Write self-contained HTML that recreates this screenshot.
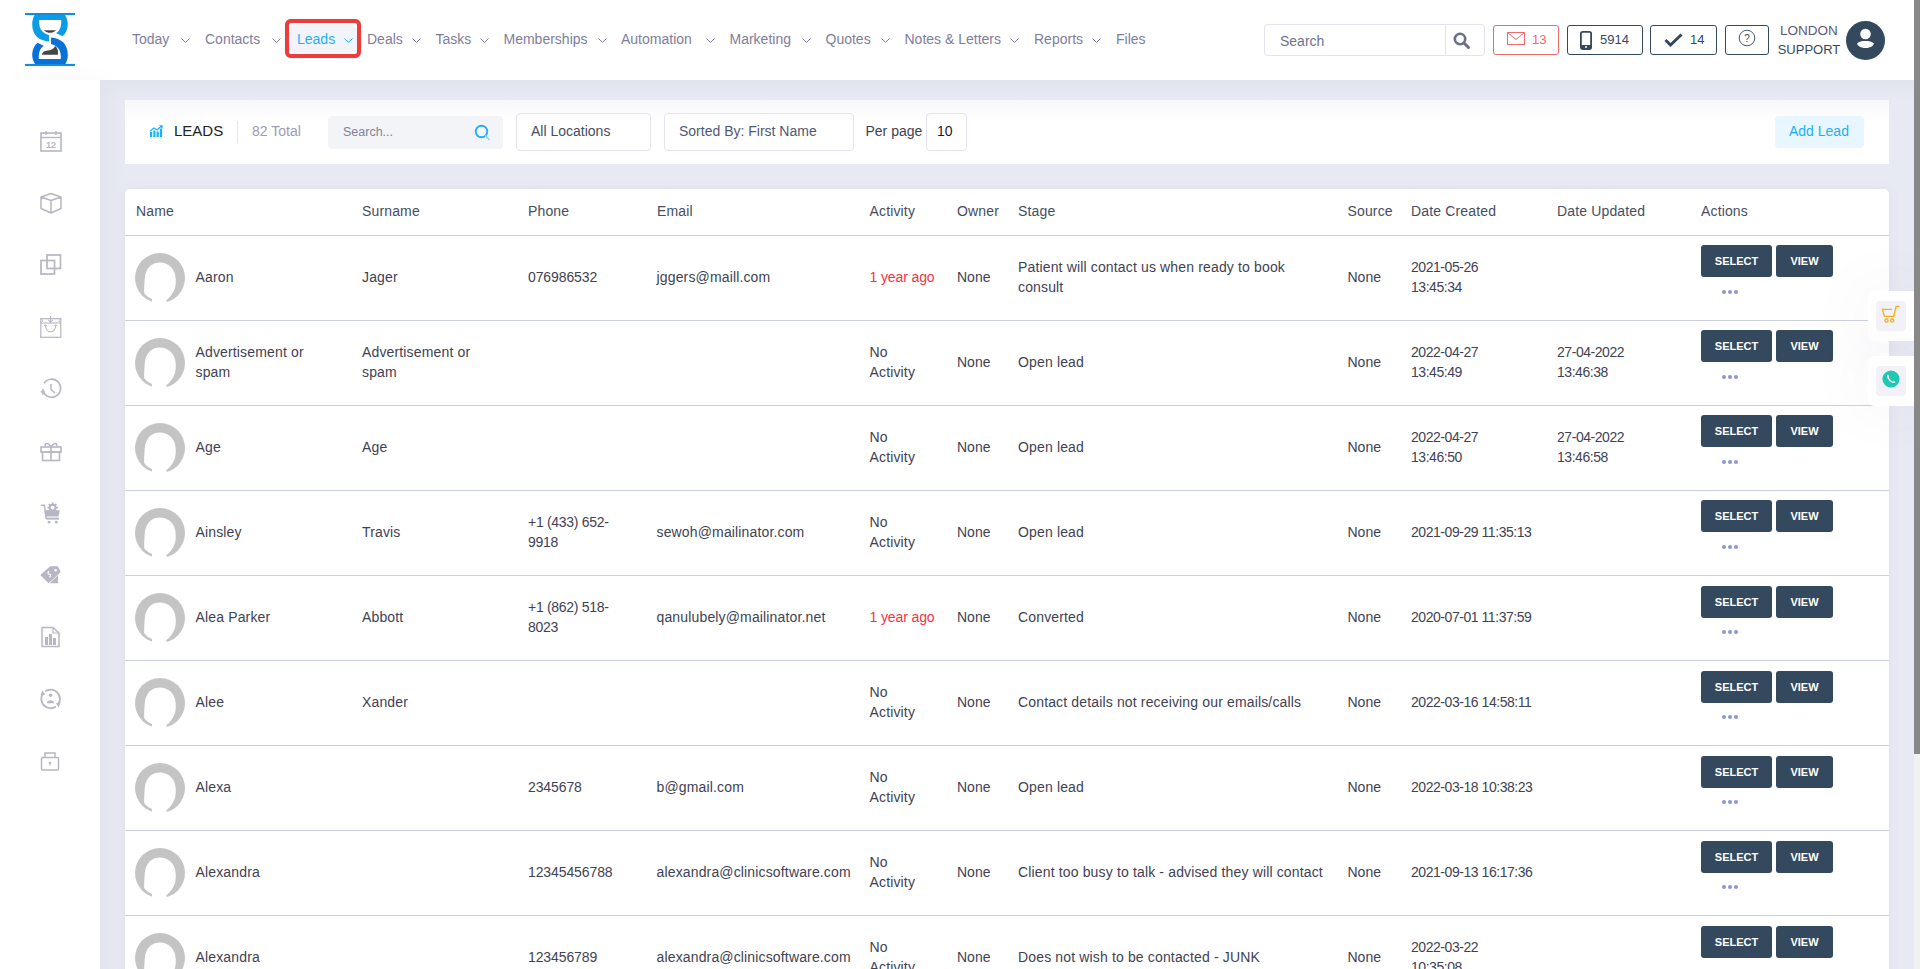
<!DOCTYPE html>
<html><head><meta charset="utf-8"><title>Leads</title>
<style>
*{box-sizing:border-box;margin:0;padding:0}
html,body{width:1920px;height:969px;overflow:hidden}
body{font-family:"Liberation Sans", sans-serif;position:relative;background:#e9ebf4;color:#3f4254}
.a{position:absolute;white-space:nowrap}
.t{position:absolute;white-space:nowrap;font-size:14px;line-height:20px;color:#3f4254;letter-spacing:.15px}
.nav{position:absolute;font-size:14px;line-height:20px;color:#7f7d9c;white-space:nowrap;top:29px}
.chev{position:absolute;top:38px;width:9px;height:5px}
.btn{position:absolute;height:32px;background:#34495e;color:#fff;font-weight:700;font-size:11px;line-height:32px;text-align:center;border-radius:3px}
.dots{position:absolute;width:4px;height:4px;border-radius:50%;background:#8e93d9}
.line{position:absolute;left:125px;width:1764px;height:1px;background:#cdd1df}
</style></head><body>

<div class="a" style="left:100px;top:80px;width:1814px;height:889px;background:linear-gradient(to right,#e2e4ee 0,#e8eaf3 25px,#e8eaf3 100%)"></div>
<div class="a" style="left:100px;top:80px;width:1814px;height:20px;background:linear-gradient(to bottom,#e1e3ed,rgba(232,234,243,0))"></div>
<div class="a" style="left:0;top:0;width:1914px;height:80px;background:#fff"></div>
<div class="a" style="left:0;top:80px;width:100px;height:889px;background:#fff"></div>
<div class="a" style="left:0;top:60px;width:125px;height:20px;background:radial-gradient(ellipse 58px 16px at 62px 20px,rgba(0,0,0,0.018),rgba(0,0,0,0))"></div>
<svg class="a" style="left:25px;top:10px" width="50" height="58" viewBox="0 0 50 58">
<rect x="0" y="3" width="50" height="2.1" fill="#0c8fe3"/>
<rect x="0" y="53.9" width="50" height="2.1" fill="#0c8fe3"/>
<path id="tp" d="M37.4 26.3 C40.5 24 42.5 20 42.8 15 C43 12 42 8 40 5 L9.6 5 C8 8 7.2 11 7.2 14 C7.2 20 9 24 12 27 C15 29.5 19 31 24 31.6 L24 25 C20.5 24.2 17.5 22 15.8 19.5 C14.5 17 14 14 14.2 9.9 L36.2 9.9 C36.4 14 36 17 34.6 19.5 C33.5 21.3 32.5 22.3 31 23 Z" fill="#0a9ce6"/>
<path d="M37.4 26.3 C40.5 24 42.5 20 42.8 15 C43 12 42 8 40 5 L9.6 5 C8 8 7.2 11 7.2 14 C7.2 20 9 24 12 27 C15 29.5 19 31 24 31.6 L24 25 C20.5 24.2 17.5 22 15.8 19.5 C14.5 17 14 14 14.2 9.9 L36.2 9.9 C36.4 14 36 17 34.6 19.5 C33.5 21.3 32.5 22.3 31 23 Z" fill="#0a72d4" transform="rotate(180 25 29.5)"/>
<path d="M19 20.2 H31 C29 22 27 22.8 25 22.8 C23 22.8 21 22 19 20.2Z" fill="#464646"/>
<path d="M17 44.7 C17.5 42 19 41 23 40.5 C27 40 29 38.5 30 36 C32 37.5 33.5 40 33 44.7 Z" fill="#464646"/>
</svg>
<div class="a" style="left:285px;top:19px;width:76px;height:39px;border:4px solid #ee3b3b;border-radius:6px;background:#fff;box-shadow:0 0 1px rgba(0,0,0,.35)"></div>
<div class="a" style="left:290px;top:25px;width:67px;height:28px;border-radius:6px;background:#f3f4fa"></div>
<div class="nav" style="left:132px;color:#7f7d9c">Today</div>
<svg class="chev" style="left:181px" viewBox="0 0 9 5"><path d="M0.5 0.5 L4.5 4.5 L8.5 0.5" fill="none" stroke="#7f7d9c" stroke-width="1"/></svg>
<div class="nav" style="left:205px;color:#7f7d9c">Contacts</div>
<svg class="chev" style="left:272px" viewBox="0 0 9 5"><path d="M0.5 0.5 L4.5 4.5 L8.5 0.5" fill="none" stroke="#7f7d9c" stroke-width="1"/></svg>
<div class="nav" style="left:297px;color:#1db2fa">Leads</div>
<svg class="chev" style="left:344px" viewBox="0 0 9 5"><path d="M0.5 0.5 L4.5 4.5 L8.5 0.5" fill="none" stroke="#1db2fa" stroke-width="1"/></svg>
<div class="nav" style="left:367px;color:#7f7d9c">Deals</div>
<svg class="chev" style="left:412px" viewBox="0 0 9 5"><path d="M0.5 0.5 L4.5 4.5 L8.5 0.5" fill="none" stroke="#7f7d9c" stroke-width="1"/></svg>
<div class="nav" style="left:435.5px;color:#7f7d9c">Tasks</div>
<svg class="chev" style="left:480px" viewBox="0 0 9 5"><path d="M0.5 0.5 L4.5 4.5 L8.5 0.5" fill="none" stroke="#7f7d9c" stroke-width="1"/></svg>
<div class="nav" style="left:503.5px;color:#7f7d9c">Memberships</div>
<svg class="chev" style="left:597.5px" viewBox="0 0 9 5"><path d="M0.5 0.5 L4.5 4.5 L8.5 0.5" fill="none" stroke="#7f7d9c" stroke-width="1"/></svg>
<div class="nav" style="left:621px;color:#7f7d9c">Automation</div>
<svg class="chev" style="left:705.5px" viewBox="0 0 9 5"><path d="M0.5 0.5 L4.5 4.5 L8.5 0.5" fill="none" stroke="#7f7d9c" stroke-width="1"/></svg>
<div class="nav" style="left:729.5px;color:#7f7d9c">Marketing</div>
<svg class="chev" style="left:801.5px" viewBox="0 0 9 5"><path d="M0.5 0.5 L4.5 4.5 L8.5 0.5" fill="none" stroke="#7f7d9c" stroke-width="1"/></svg>
<div class="nav" style="left:825.5px;color:#7f7d9c">Quotes</div>
<svg class="chev" style="left:880.5px" viewBox="0 0 9 5"><path d="M0.5 0.5 L4.5 4.5 L8.5 0.5" fill="none" stroke="#7f7d9c" stroke-width="1"/></svg>
<div class="nav" style="left:904.5px;color:#7f7d9c">Notes &amp; Letters</div>
<svg class="chev" style="left:1010px" viewBox="0 0 9 5"><path d="M0.5 0.5 L4.5 4.5 L8.5 0.5" fill="none" stroke="#7f7d9c" stroke-width="1"/></svg>
<div class="nav" style="left:1034px;color:#7f7d9c">Reports</div>
<svg class="chev" style="left:1092px" viewBox="0 0 9 5"><path d="M0.5 0.5 L4.5 4.5 L8.5 0.5" fill="none" stroke="#7f7d9c" stroke-width="1"/></svg>
<div class="nav" style="left:1116px;color:#7f7d9c">Files</div>
<div class="a" style="left:1264px;top:24px;width:221px;height:32px;border:1px solid #e2e2f0;border-radius:4px;background:#fff"></div>
<div class="a" style="left:1445px;top:25px;width:1px;height:30px;background:#e2e2f0"></div>
<div class="a" style="left:1280px;top:31px;font-size:14px;line-height:20px;color:#6c7293">Search</div>
<svg class="a" style="left:1453px;top:32px" width="18" height="18" viewBox="0 0 18 18"><circle cx="7" cy="7" r="5.2" fill="none" stroke="#6c6f8a" stroke-width="2.6"/><path d="M10.8 10.8 L15.5 15.5" stroke="#6c6f8a" stroke-width="3" stroke-linecap="round"/></svg>
<div class="a" style="left:1493px;top:25px;width:66px;height:30px;border:1px solid #f06b6b;border-radius:3px"></div>
<svg class="a" style="left:1507px;top:32px" width="18" height="13" viewBox="0 0 18 13"><rect x="0.5" y="0.5" width="17" height="12" fill="none" stroke="#f06b6b" stroke-width="1"/><path d="M0.5 0.5 L9 7.5 L17.5 0.5" fill="none" stroke="#f06b6b" stroke-width="1"/></svg>
<div class="a" style="left:1532px;top:30px;font-size:13px;line-height:20px;color:#f06b6b">13</div>
<div class="a" style="left:1567px;top:25px;width:76px;height:30px;border:1px solid #34495e;border-radius:3px"></div>
<svg class="a" style="left:1580px;top:31px" width="12" height="19" viewBox="0 0 12 19"><rect x="0.9" y="0.9" width="10.2" height="17.2" rx="1.8" fill="none" stroke="#34495e" stroke-width="1.8"/><rect x="1" y="14" width="10" height="4" fill="#34495e"/><circle cx="6" cy="16" r="1" fill="#fff"/></svg>
<div class="a" style="left:1600px;top:30px;font-size:13px;line-height:20px;color:#34495e">5914</div>
<div class="a" style="left:1650px;top:25px;width:67px;height:30px;border:1px solid #34495e;border-radius:3px"></div>
<svg class="a" style="left:1664px;top:33px" width="19" height="14" viewBox="0 0 19 14"><path d="M1.5 7 L6.5 12 L17.5 1.5" fill="none" stroke="#34495e" stroke-width="3"/></svg>
<div class="a" style="left:1690px;top:30px;font-size:13px;line-height:20px;color:#34495e">14</div>
<div class="a" style="left:1725px;top:25px;width:44px;height:30px;border:1px solid #34495e;border-radius:3px"></div>
<svg class="a" style="left:1738px;top:29px" width="18" height="18" viewBox="0 0 18 18"><circle cx="9" cy="9" r="7.8" fill="none" stroke="#34495e" stroke-width="0.9"/><text x="9" y="12.5" text-anchor="middle" font-family="Liberation Sans" font-size="10" fill="#34495e">?</text></svg>
<div class="a" style="left:1770px;top:21px;width:78px;text-align:center;font-size:13.5px;line-height:19px;color:#5f5877">LONDON</div>
<div class="a" style="left:1772px;top:40px;width:74px;text-align:center;font-size:13px;line-height:19px;color:#34495e">SUPPORT</div>
<svg class="a" style="left:1846px;top:21px" width="39" height="39" viewBox="0 0 39 39"><circle cx="19.5" cy="19.5" r="19.5" fill="#34495e"/><circle cx="19.5" cy="13" r="5.3" fill="#fff"/><path d="M11 22.5 C13 20.5 16 20 19.5 20 C23 20 26 20.5 28 22.5 C27 25.5 23.5 27 19.5 27 C15.5 27 12 25.5 11 22.5Z" fill="#fff"/></svg>
<svg class="a" style="left:40px;top:130px" width="22" height="22" viewBox="0 0 22 22"><rect x="1" y="3" width="20" height="18" fill="none" stroke="#b6b6c4" stroke-width="1.6"/><path d="M1 7.5 H21" stroke="#b6b6c4" stroke-width="1.4"/><path d="M6 1 V5 M16 1 V5" stroke="#b6b6c4" stroke-width="1.4"/><text x="11" y="17.8" text-anchor="middle" font-family="Liberation Sans" font-weight="bold" font-size="9" fill="#b6b6c4">12</text></svg>
<svg class="a" style="left:40px;top:192px" width="22" height="22" viewBox="0 0 22 22"><path d="M1 5 L11 1.5 L21 5 V16.5 L11 21 L1 16.5 Z M1 5 L11 8.5 L21 5 M11 8.5 V21" fill="none" stroke="#b6b6c4" stroke-width="1.5" stroke-linejoin="round"/></svg>
<svg class="a" style="left:40px;top:254px" width="22" height="22" viewBox="0 0 22 22"><rect x="7" y="1" width="13.5" height="13.5" fill="none" stroke="#b6b6c4" stroke-width="1.7"/><rect x="1" y="6.5" width="13.5" height="13.5" fill="none" stroke="#b6b6c4" stroke-width="1.7"/></svg>
<svg class="a" style="left:40px;top:316px" width="22" height="22" viewBox="0 0 22 22"><rect x="0.8" y="2.7" width="20" height="18.6" fill="none" stroke="#b6b6c4" stroke-width="1.2"/><path d="M0.8 7 H20.8" stroke="#b6b6c4" stroke-width="1.1"/><path d="M0.8 2.7 L3 4.8 L0.8 7 M20.8 2.7 L18.6 4.8 L20.8 7" fill="none" stroke="#b6b6c4" stroke-width="0.9"/><path d="M10.6 0 V6" stroke="#b6b6c4" stroke-width="1.1"/><path d="M8.3 3.8 L10.6 6.3 L12.9 3.8" fill="none" stroke="#b6b6c4" stroke-width="1.1"/><path d="M5.5 9.2 C5.5 18 15.7 18 15.7 9.2" fill="none" stroke="#b6b6c4" stroke-width="1.1"/><path d="M4 10.3 L5.5 8.6 L7 10.3 M14.2 10.3 L15.7 8.6 L17.2 10.3" fill="none" stroke="#b6b6c4" stroke-width="1"/></svg>
<svg class="a" style="left:40px;top:378px" width="22" height="22" viewBox="0 0 22 22"><path d="M3.2 14 A9 9 0 1 0 2.5 8" fill="none" stroke="#b6b6c4" stroke-width="1.6" transform="rotate(20 11 11)"/><path d="M11 6 V11.5 L15 15" fill="none" stroke="#b6b6c4" stroke-width="1.5"/><path d="M0.5 13 L5 12.5 L3 17.5Z" fill="#b6b6c4"/></svg>
<svg class="a" style="left:40px;top:440px" width="22" height="22" viewBox="0 0 22 22"><rect x="1" y="7" width="20" height="5" fill="none" stroke="#b6b6c4" stroke-width="1.6"/><rect x="2.5" y="12" width="17" height="8.5" fill="none" stroke="#b6b6c4" stroke-width="1.6"/><path d="M11 7 V20.5" stroke="#b6b6c4" stroke-width="1.6"/><path d="M11 7 C8 2 4 3 5.5 6.5 M11 7 C14 2 18 3 16.5 6.5" fill="none" stroke="#b6b6c4" stroke-width="1.5"/></svg>
<svg class="a" style="left:40px;top:502px" width="22" height="22" viewBox="0 0 22 22"><path d="M0.8 3.3 H4.4 L6.2 16.6 H19" fill="none" stroke="#b6b6c4" stroke-width="1.5"/><g transform="translate(12.7 5.6)"><circle r="3.9" fill="#b6b6c4"/><path d="M-0.9 -5.3 H0.9 V5.3 H-0.9Z M-5.3 -0.9 V0.9 H5.3 V-0.9Z" fill="#b6b6c4"/><path d="M-0.9 -5.3 H0.9 V5.3 H-0.9Z M-5.3 -0.9 V0.9 H5.3 V-0.9Z" fill="#b6b6c4" transform="rotate(45)"/><circle r="1.9" fill="#fff"/></g><path d="M4.4 8.3 H19.9 L18.4 14.6 H5.5 Z" fill="#b6b6c4"/><rect x="6.3" y="15.8" width="12.6" height="1.7" fill="#b6b6c4"/><circle cx="9.1" cy="20.2" r="1.4" fill="#b6b6c4"/><circle cx="16.3" cy="20.2" r="1.4" fill="#b6b6c4"/></svg>
<svg class="a" style="left:40px;top:564px" width="22" height="22" viewBox="0 0 22 22"><path d="M0.3 11 L10.2 2.2 H17.6 L21 7.8 L8.6 19.2 Z" fill="#b6b6c4"/><path d="M9.6 19.2 L18 11.3 V19.2 Z" fill="#b6b6c4"/><circle cx="15.6" cy="6.3" r="1.3" fill="#fff"/><path d="M19.5 5.5 C21 4.5 21.5 7 20 8" fill="none" stroke="#fff" stroke-width="0.8"/><path d="M10.2 7.6 C8.4 7.4 7.6 9.6 9.2 10.2 C10.8 10.8 10.4 13.2 8.2 13" fill="none" stroke="#fff" stroke-width="1.2" transform="rotate(-20 9.2 10.3)"/></svg>
<svg class="a" style="left:40px;top:626px" width="22" height="22" viewBox="0 0 22 22"><path d="M2 1.5 H13 L19 7 V20.5 H2 Z" fill="none" stroke="#b6b6c4" stroke-width="1.5" stroke-linejoin="round"/><path d="M13 1.5 V7 H19" fill="none" stroke="#b6b6c4" stroke-width="1.2"/><rect x="5" y="11" width="3" height="8" fill="#b6b6c4"/><rect x="9" y="8" width="3" height="11" fill="#b6b6c4"/><rect x="13" y="12" width="3" height="7" fill="#b6b6c4"/></svg>
<svg class="a" style="left:40px;top:688px" width="22" height="22" viewBox="0 0 22 22"><path d="M5.27 3.28 A9.3 9.3 0 0 1 18.22 16.23" fill="none" stroke="#b6b6c4" stroke-width="1.9"/><path d="M15.93 18.52 A9.3 9.3 0 0 1 2.98 5.57" fill="none" stroke="#b6b6c4" stroke-width="1.9"/><path d="M16 15.2 L20.6 14.6 L18.6 19.4Z" fill="#b6b6c4"/><path d="M5.2 6.6 L0.6 7.2 L2.6 2.4Z" fill="#b6b6c4"/><circle cx="10.6" cy="7.3" r="1.8" fill="#b6b6c4"/><path d="M6.9 15.2 C6.9 11.2 14.3 11.2 14.3 15.2 Z" fill="#b6b6c4"/></svg>
<svg class="a" style="left:40px;top:750px" width="22" height="22" viewBox="0 0 22 22"><path d="M5 7.5 V3 H15 V7.5" fill="none" stroke="#b6b6c4" stroke-width="1.5"/><rect x="1.5" y="7.5" width="17" height="12.5" rx="1" fill="none" stroke="#b6b6c4" stroke-width="1.5"/><circle cx="10" cy="13" r="1.2" fill="#b6b6c4"/><path d="M10 13 V15.5" stroke="#b6b6c4" stroke-width="1"/></svg>
<div class="a" style="left:125px;top:100px;width:1764px;height:64px;background:#fff"></div>
<div class="a" style="left:125px;top:100px;width:1764px;height:22px;background:linear-gradient(#f8f8fb,#fff)"></div>
<svg class="a" style="left:150px;top:125px" width="13" height="12" viewBox="0 0 13 12"><rect x="0" y="7" width="2.2" height="5" fill="#1ab2ff"/><rect x="3.3" y="5.5" width="2.2" height="6.5" fill="#1ab2ff"/><rect x="6.6" y="6.5" width="2.2" height="5.5" fill="#1ab2ff"/><rect x="9.9" y="3.5" width="2.2" height="8.5" fill="#1ab2ff"/><path d="M0 6 L4 3 L7 5 L11.5 1" fill="none" stroke="#1ab2ff" stroke-width="1.3"/><path d="M9 0.3 H12.6 V3.8Z" fill="#1ab2ff"/></svg>
<div class="a" style="left:174px;top:121px;font-size:15px;line-height:20px;color:#212121">LEADS</div>
<div class="a" style="left:237px;top:121px;width:1px;height:22px;background:#e4e6ef"></div>
<div class="a" style="left:252px;top:121px;font-size:14px;line-height:20px;color:#9a9cb4">82 Total</div>
<div class="a" style="left:328px;top:116px;width:175px;height:33px;background:#f3f4f8;border-radius:4px"></div>
<div class="a" style="left:343px;top:122px;font-size:12.5px;line-height:20px;color:#7e8299">Search...</div>
<svg class="a" style="left:474px;top:124px" width="17" height="18" viewBox="0 0 17 18"><circle cx="7.5" cy="7.5" r="5.8" fill="none" stroke="#1ab0fb" stroke-width="1.9"/><path d="M11.8 12 L15 15.5" stroke="#8fd5fb" stroke-width="1.8" stroke-linecap="round"/></svg>
<div class="a" style="left:516px;top:113px;width:135px;height:38px;border:1px solid #e2e4ee;border-radius:4px"></div>
<div class="a" style="left:531px;top:121px;font-size:14px;line-height:20px;color:#464e5f">All Locations</div>
<div class="a" style="left:664px;top:113px;width:190px;height:38px;border:1px solid #e2e4ee;border-radius:4px"></div>
<div class="a" style="left:679px;top:121px;font-size:14px;line-height:20px;color:#525870">Sorted By: First Name</div>
<div class="a" style="left:865.5px;top:121px;font-size:14px;line-height:20px;color:#3f4254">Per page</div>
<div class="a" style="left:926px;top:113px;width:41px;height:38px;border:1px solid #e2e4ee;border-radius:4px"></div>
<div class="a" style="left:937px;top:121px;font-size:14px;line-height:20px;color:#181c32">10</div>
<div class="a" style="left:1775px;top:116px;width:89px;height:32px;background:#e8f6ff;border-radius:4px"></div>
<div class="a" style="left:1789px;top:121px;font-size:14px;line-height:20px;color:#1bb0f5;font-weight:400">Add Lead</div>
<div class="a" style="left:125px;top:189px;width:1764px;height:800px;background:#fff;border-radius:5px 5px 0 0;box-shadow:0 0 12px rgba(70,80,130,0.07)"></div>
<div class="t" style="left:136px;top:201px;color:#464e5f">Name</div>
<div class="t" style="left:362px;top:201px;color:#464e5f">Surname</div>
<div class="t" style="left:528px;top:201px;color:#464e5f">Phone</div>
<div class="t" style="left:657px;top:201px;color:#464e5f">Email</div>
<div class="t" style="left:869.5px;top:201px;color:#464e5f">Activity</div>
<div class="t" style="left:957px;top:201px;color:#464e5f">Owner</div>
<div class="t" style="left:1018px;top:201px;color:#464e5f">Stage</div>
<div class="t" style="left:1347.5px;top:201px;color:#464e5f">Source</div>
<div class="t" style="left:1411px;top:201px;color:#464e5f">Date Created</div>
<div class="t" style="left:1557px;top:201px;color:#464e5f">Date Updated</div>
<div class="t" style="left:1701px;top:201px;color:#464e5f">Actions</div>
<div class="line" style="top:235px"></div>
<div class="line" style="top:320px"></div>
<div class="line" style="top:405px"></div>
<div class="line" style="top:490px"></div>
<div class="line" style="top:575px"></div>
<div class="line" style="top:660px"></div>
<div class="line" style="top:745px"></div>
<div class="line" style="top:830px"></div>
<div class="line" style="top:915px"></div>
<svg class="a" style="left:135px;top:253px" width="50" height="50" viewBox="0 0 50 50"><circle cx="25" cy="25" r="25" fill="#c4c4c4"/><path d="M17.5 51 L16.8 45.8 C13.5 44.5 10.5 42.5 9.2 40 C9 36 9.4 31 9.7 26 C10 20 12 16 15 13 C18 10.5 21 9.4 25 9.4 C29 9.4 33 11 36 14 C39 17 40.5 21 40.7 26 C40.9 30 40.5 34 39.6 36 C38 40.5 35 44.5 31.3 47.3 L32 51 Z" fill="#fff"/></svg>
<div class="t" style="left:195.5px;top:267px">Aaron</div>
<div class="t" style="left:362px;top:267px">Jager</div>
<div class="t" style="left:528px;top:267px;letter-spacing:-0.1px">076986532</div>
<div class="t" style="left:656.5px;top:267px">jggers@maill.com</div>
<div class="t" style="left:869.5px;top:267px;color:#f5333f;letter-spacing:-0.12px">1 year ago</div>
<div class="t" style="left:957px;top:267px;letter-spacing:0px">None</div>
<div class="t" style="left:1018px;top:257px">Patient will contact us when ready to book<br>consult</div>
<div class="t" style="left:1347.5px;top:267px;letter-spacing:0px">None</div>
<div class="t" style="left:1411px;top:257px;letter-spacing:-0.45px">2021-05-26<br>13:45:34</div>
<div class="btn" style="left:1701px;top:245px;width:71px">SELECT</div>
<div class="btn" style="left:1776px;top:245px;width:57px">VIEW</div>
<div class="dots" style="left:1722px;top:290px"></div>
<div class="dots" style="left:1728px;top:290px"></div>
<div class="dots" style="left:1734px;top:290px"></div>
<svg class="a" style="left:135px;top:338px" width="50" height="50" viewBox="0 0 50 50"><circle cx="25" cy="25" r="25" fill="#c4c4c4"/><path d="M17.5 51 L16.8 45.8 C13.5 44.5 10.5 42.5 9.2 40 C9 36 9.4 31 9.7 26 C10 20 12 16 15 13 C18 10.5 21 9.4 25 9.4 C29 9.4 33 11 36 14 C39 17 40.5 21 40.7 26 C40.9 30 40.5 34 39.6 36 C38 40.5 35 44.5 31.3 47.3 L32 51 Z" fill="#fff"/></svg>
<div class="t" style="left:195.5px;top:342px">Advertisement or<br>spam</div>
<div class="t" style="left:362px;top:342px">Advertisement or<br>spam</div>
<div class="t" style="left:528px;top:352px;letter-spacing:-0.1px"></div>
<div class="t" style="left:656.5px;top:352px"></div>
<div class="t" style="left:869.5px;top:342px">No<br>Activity</div>
<div class="t" style="left:957px;top:352px;letter-spacing:0px">None</div>
<div class="t" style="left:1018px;top:352px">Open lead</div>
<div class="t" style="left:1347.5px;top:352px;letter-spacing:0px">None</div>
<div class="t" style="left:1411px;top:342px;letter-spacing:-0.45px">2022-04-27<br>13:45:49</div>
<div class="t" style="left:1557px;top:342px;letter-spacing:-0.45px">27-04-2022<br>13:46:38</div>
<div class="btn" style="left:1701px;top:330px;width:71px">SELECT</div>
<div class="btn" style="left:1776px;top:330px;width:57px">VIEW</div>
<div class="dots" style="left:1722px;top:375px"></div>
<div class="dots" style="left:1728px;top:375px"></div>
<div class="dots" style="left:1734px;top:375px"></div>
<svg class="a" style="left:135px;top:423px" width="50" height="50" viewBox="0 0 50 50"><circle cx="25" cy="25" r="25" fill="#c4c4c4"/><path d="M17.5 51 L16.8 45.8 C13.5 44.5 10.5 42.5 9.2 40 C9 36 9.4 31 9.7 26 C10 20 12 16 15 13 C18 10.5 21 9.4 25 9.4 C29 9.4 33 11 36 14 C39 17 40.5 21 40.7 26 C40.9 30 40.5 34 39.6 36 C38 40.5 35 44.5 31.3 47.3 L32 51 Z" fill="#fff"/></svg>
<div class="t" style="left:195.5px;top:437px">Age</div>
<div class="t" style="left:362px;top:437px">Age</div>
<div class="t" style="left:528px;top:437px;letter-spacing:-0.1px"></div>
<div class="t" style="left:656.5px;top:437px"></div>
<div class="t" style="left:869.5px;top:427px">No<br>Activity</div>
<div class="t" style="left:957px;top:437px;letter-spacing:0px">None</div>
<div class="t" style="left:1018px;top:437px">Open lead</div>
<div class="t" style="left:1347.5px;top:437px;letter-spacing:0px">None</div>
<div class="t" style="left:1411px;top:427px;letter-spacing:-0.45px">2022-04-27<br>13:46:50</div>
<div class="t" style="left:1557px;top:427px;letter-spacing:-0.45px">27-04-2022<br>13:46:58</div>
<div class="btn" style="left:1701px;top:415px;width:71px">SELECT</div>
<div class="btn" style="left:1776px;top:415px;width:57px">VIEW</div>
<div class="dots" style="left:1722px;top:460px"></div>
<div class="dots" style="left:1728px;top:460px"></div>
<div class="dots" style="left:1734px;top:460px"></div>
<svg class="a" style="left:135px;top:508px" width="50" height="50" viewBox="0 0 50 50"><circle cx="25" cy="25" r="25" fill="#c4c4c4"/><path d="M17.5 51 L16.8 45.8 C13.5 44.5 10.5 42.5 9.2 40 C9 36 9.4 31 9.7 26 C10 20 12 16 15 13 C18 10.5 21 9.4 25 9.4 C29 9.4 33 11 36 14 C39 17 40.5 21 40.7 26 C40.9 30 40.5 34 39.6 36 C38 40.5 35 44.5 31.3 47.3 L32 51 Z" fill="#fff"/></svg>
<div class="t" style="left:195.5px;top:522px">Ainsley</div>
<div class="t" style="left:362px;top:522px">Travis</div>
<div class="t" style="left:528px;top:512px;letter-spacing:-0.3px">+1 (433) 652-<br>9918</div>
<div class="t" style="left:656.5px;top:522px">sewoh@mailinator.com</div>
<div class="t" style="left:869.5px;top:512px">No<br>Activity</div>
<div class="t" style="left:957px;top:522px;letter-spacing:0px">None</div>
<div class="t" style="left:1018px;top:522px">Open lead</div>
<div class="t" style="left:1347.5px;top:522px;letter-spacing:0px">None</div>
<div class="t" style="left:1411px;top:522px;letter-spacing:-0.45px">2021-09-29 11:35:13</div>
<div class="btn" style="left:1701px;top:500px;width:71px">SELECT</div>
<div class="btn" style="left:1776px;top:500px;width:57px">VIEW</div>
<div class="dots" style="left:1722px;top:545px"></div>
<div class="dots" style="left:1728px;top:545px"></div>
<div class="dots" style="left:1734px;top:545px"></div>
<svg class="a" style="left:135px;top:593px" width="50" height="50" viewBox="0 0 50 50"><circle cx="25" cy="25" r="25" fill="#c4c4c4"/><path d="M17.5 51 L16.8 45.8 C13.5 44.5 10.5 42.5 9.2 40 C9 36 9.4 31 9.7 26 C10 20 12 16 15 13 C18 10.5 21 9.4 25 9.4 C29 9.4 33 11 36 14 C39 17 40.5 21 40.7 26 C40.9 30 40.5 34 39.6 36 C38 40.5 35 44.5 31.3 47.3 L32 51 Z" fill="#fff"/></svg>
<div class="t" style="left:195.5px;top:607px">Alea Parker</div>
<div class="t" style="left:362px;top:607px">Abbott</div>
<div class="t" style="left:528px;top:597px;letter-spacing:-0.3px">+1 (862) 518-<br>8023</div>
<div class="t" style="left:656.5px;top:607px">qanulubely@mailinator.net</div>
<div class="t" style="left:869.5px;top:607px;color:#f5333f;letter-spacing:-0.12px">1 year ago</div>
<div class="t" style="left:957px;top:607px;letter-spacing:0px">None</div>
<div class="t" style="left:1018px;top:607px">Converted</div>
<div class="t" style="left:1347.5px;top:607px;letter-spacing:0px">None</div>
<div class="t" style="left:1411px;top:607px;letter-spacing:-0.45px">2020-07-01 11:37:59</div>
<div class="btn" style="left:1701px;top:586px;width:71px">SELECT</div>
<div class="btn" style="left:1776px;top:586px;width:57px">VIEW</div>
<div class="dots" style="left:1722px;top:630px"></div>
<div class="dots" style="left:1728px;top:630px"></div>
<div class="dots" style="left:1734px;top:630px"></div>
<svg class="a" style="left:135px;top:678px" width="50" height="50" viewBox="0 0 50 50"><circle cx="25" cy="25" r="25" fill="#c4c4c4"/><path d="M17.5 51 L16.8 45.8 C13.5 44.5 10.5 42.5 9.2 40 C9 36 9.4 31 9.7 26 C10 20 12 16 15 13 C18 10.5 21 9.4 25 9.4 C29 9.4 33 11 36 14 C39 17 40.5 21 40.7 26 C40.9 30 40.5 34 39.6 36 C38 40.5 35 44.5 31.3 47.3 L32 51 Z" fill="#fff"/></svg>
<div class="t" style="left:195.5px;top:692px">Alee</div>
<div class="t" style="left:362px;top:692px">Xander</div>
<div class="t" style="left:528px;top:692px;letter-spacing:-0.1px"></div>
<div class="t" style="left:656.5px;top:692px"></div>
<div class="t" style="left:869.5px;top:682px">No<br>Activity</div>
<div class="t" style="left:957px;top:692px;letter-spacing:0px">None</div>
<div class="t" style="left:1018px;top:692px">Contact details not receiving our emails/calls</div>
<div class="t" style="left:1347.5px;top:692px;letter-spacing:0px">None</div>
<div class="t" style="left:1411px;top:692px;letter-spacing:-0.45px">2022-03-16 14:58:11</div>
<div class="btn" style="left:1701px;top:671px;width:71px">SELECT</div>
<div class="btn" style="left:1776px;top:671px;width:57px">VIEW</div>
<div class="dots" style="left:1722px;top:715px"></div>
<div class="dots" style="left:1728px;top:715px"></div>
<div class="dots" style="left:1734px;top:715px"></div>
<svg class="a" style="left:135px;top:763px" width="50" height="50" viewBox="0 0 50 50"><circle cx="25" cy="25" r="25" fill="#c4c4c4"/><path d="M17.5 51 L16.8 45.8 C13.5 44.5 10.5 42.5 9.2 40 C9 36 9.4 31 9.7 26 C10 20 12 16 15 13 C18 10.5 21 9.4 25 9.4 C29 9.4 33 11 36 14 C39 17 40.5 21 40.7 26 C40.9 30 40.5 34 39.6 36 C38 40.5 35 44.5 31.3 47.3 L32 51 Z" fill="#fff"/></svg>
<div class="t" style="left:195.5px;top:777px">Alexa</div>
<div class="t" style="left:362px;top:777px"></div>
<div class="t" style="left:528px;top:777px;letter-spacing:-0.1px">2345678</div>
<div class="t" style="left:656.5px;top:777px">b@gmail.com</div>
<div class="t" style="left:869.5px;top:767px">No<br>Activity</div>
<div class="t" style="left:957px;top:777px;letter-spacing:0px">None</div>
<div class="t" style="left:1018px;top:777px">Open lead</div>
<div class="t" style="left:1347.5px;top:777px;letter-spacing:0px">None</div>
<div class="t" style="left:1411px;top:777px;letter-spacing:-0.45px">2022-03-18 10:38:23</div>
<div class="btn" style="left:1701px;top:756px;width:71px">SELECT</div>
<div class="btn" style="left:1776px;top:756px;width:57px">VIEW</div>
<div class="dots" style="left:1722px;top:800px"></div>
<div class="dots" style="left:1728px;top:800px"></div>
<div class="dots" style="left:1734px;top:800px"></div>
<svg class="a" style="left:135px;top:848px" width="50" height="50" viewBox="0 0 50 50"><circle cx="25" cy="25" r="25" fill="#c4c4c4"/><path d="M17.5 51 L16.8 45.8 C13.5 44.5 10.5 42.5 9.2 40 C9 36 9.4 31 9.7 26 C10 20 12 16 15 13 C18 10.5 21 9.4 25 9.4 C29 9.4 33 11 36 14 C39 17 40.5 21 40.7 26 C40.9 30 40.5 34 39.6 36 C38 40.5 35 44.5 31.3 47.3 L32 51 Z" fill="#fff"/></svg>
<div class="t" style="left:195.5px;top:862px">Alexandra</div>
<div class="t" style="left:362px;top:862px"></div>
<div class="t" style="left:528px;top:862px;letter-spacing:-0.1px">12345456788</div>
<div class="t" style="left:656.5px;top:862px">alexandra@clinicsoftware.com</div>
<div class="t" style="left:869.5px;top:852px">No<br>Activity</div>
<div class="t" style="left:957px;top:862px;letter-spacing:0px">None</div>
<div class="t" style="left:1018px;top:862px">Client too busy to talk - advised they will contact</div>
<div class="t" style="left:1347.5px;top:862px;letter-spacing:0px">None</div>
<div class="t" style="left:1411px;top:862px;letter-spacing:-0.45px">2021-09-13 16:17:36</div>
<div class="btn" style="left:1701px;top:841px;width:71px">SELECT</div>
<div class="btn" style="left:1776px;top:841px;width:57px">VIEW</div>
<div class="dots" style="left:1722px;top:885px"></div>
<div class="dots" style="left:1728px;top:885px"></div>
<div class="dots" style="left:1734px;top:885px"></div>
<svg class="a" style="left:135px;top:933px" width="50" height="50" viewBox="0 0 50 50"><circle cx="25" cy="25" r="25" fill="#c4c4c4"/><path d="M17.5 51 L16.8 45.8 C13.5 44.5 10.5 42.5 9.2 40 C9 36 9.4 31 9.7 26 C10 20 12 16 15 13 C18 10.5 21 9.4 25 9.4 C29 9.4 33 11 36 14 C39 17 40.5 21 40.7 26 C40.9 30 40.5 34 39.6 36 C38 40.5 35 44.5 31.3 47.3 L32 51 Z" fill="#fff"/></svg>
<div class="t" style="left:195.5px;top:947px">Alexandra</div>
<div class="t" style="left:362px;top:947px"></div>
<div class="t" style="left:528px;top:947px;letter-spacing:-0.1px">123456789</div>
<div class="t" style="left:656.5px;top:947px">alexandra@clinicsoftware.com</div>
<div class="t" style="left:869.5px;top:937px">No<br>Activity</div>
<div class="t" style="left:957px;top:947px;letter-spacing:0px">None</div>
<div class="t" style="left:1018px;top:947px">Does not wish to be contacted - JUNK</div>
<div class="t" style="left:1347.5px;top:947px;letter-spacing:0px">None</div>
<div class="t" style="left:1411px;top:937px;letter-spacing:-0.45px">2022-03-22<br>10:35:08</div>
<div class="btn" style="left:1701px;top:926px;width:71px">SELECT</div>
<div class="btn" style="left:1776px;top:926px;width:57px">VIEW</div>
<div class="dots" style="left:1722px;top:970px"></div>
<div class="dots" style="left:1728px;top:970px"></div>
<div class="dots" style="left:1734px;top:970px"></div>
<div class="a" style="left:1868px;top:291px;width:46px;height:50px;background:#fff;border-radius:6px 0 0 6px;box-shadow:0 0 70px rgba(70,70,110,0.07)"></div>
<div class="a" style="left:1868px;top:356px;width:46px;height:50px;background:#fff;border-radius:6px 0 0 6px;box-shadow:0 0 70px rgba(70,70,110,0.07)"></div>
<div class="a" style="left:1876px;top:301px;width:30px;height:30px;background:#f1f1f7;border-radius:4px"></div>
<div class="a" style="left:1876px;top:366px;width:30px;height:30px;background:#f1f1f7;border-radius:4px"></div>
<svg class="a" style="left:1881px;top:305px" width="20" height="20" viewBox="0 0 20 20"><path d="M1.2 4.4 H11.2 M1.2 4.4 L3.5 11.4 H12.8 L15.1 1.4 H18.3" fill="none" stroke="#fbae18" stroke-width="1.4" stroke-linejoin="round"/><circle cx="5.5" cy="15.6" r="1.6" fill="none" stroke="#fbae18" stroke-width="1.3"/><circle cx="11.1" cy="15.6" r="1.6" fill="none" stroke="#fbae18" stroke-width="1.3"/></svg>
<svg class="a" style="left:1882px;top:370px" width="18" height="18" viewBox="0 0 18 18"><circle cx="9" cy="9" r="8.6" fill="#1ec8b3"/><path d="M5.5 4.5 C5 5 4.8 6 5.2 7.2 C6 9.6 8.2 12 10.8 12.9 C12 13.3 12.8 13.1 13.3 12.6 L12.2 11 L10.6 11.4 C9 10.7 7.5 9.2 6.8 7.5 L7.3 6 Z" fill="#fff"/></svg>
<div class="a" style="left:1914px;top:0;width:6px;height:969px;background:#f1f1f1"></div>
<div class="a" style="left:1914px;top:0;width:6px;height:754px;background:#888"></div>
</body></html>
